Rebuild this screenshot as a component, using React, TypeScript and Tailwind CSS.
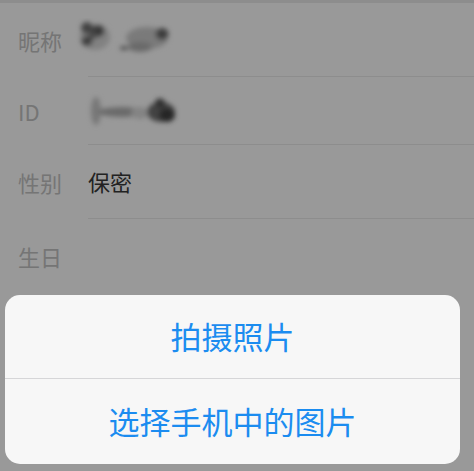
import React from 'react'

const FONT = { fontFamily: '"Noto Sans CJK SC", "Noto Sans", sans-serif' }

// blurred (redacted) nickname / id values, drawn in page coordinates
function Smudge({ viewBox, children }: { viewBox: string; children: React.ReactNode }) {
  return (
    <svg width="116" height="44" viewBox={viewBox} className="-ml-[14px] shrink-0">
      <defs>
        <filter id="smudge" x="-20%" y="-50%" width="140%" height="200%">
          <feGaussianBlur stdDeviation="2.8" />
        </filter>
      </defs>
      <g filter="url(#smudge)">{children}</g>
    </svg>
  )
}

function Row({ label, h, children, last }: { label: string; h: string; children?: React.ReactNode; last?: boolean }) {
  return (
    <div className={`flex items-center pl-[18px] ${h}`}>
      <span className="w-[70px] text-[22px] text-[#c4c4c4]">{label}</span>
      <div className={`flex h-full flex-1 items-center ${last ? '' : 'border-b border-[#ececec]'}`}>
        {children}
      </div>
    </div>
  )
}

export default function App() {
  return (
    <div className="relative h-[471px] w-[474px] overflow-hidden bg-white" style={FONT}>
      <div className="h-[3px] bg-[#ebebeb]" />
      <Row label="昵称" h="h-[74px]">
        <Smudge viewBox="74 18 116 44">
          <ellipse cx="95" cy="37" rx="15" ry="13" fill="#d8d8d8" />
          <ellipse cx="87" cy="28" rx="6" ry="6" fill="#707070" />
          <ellipse cx="98" cy="31" rx="6.5" ry="6" fill="#5a5a5a" />
          <ellipse cx="87" cy="41" rx="5.5" ry="5" fill="#666" />
          <ellipse cx="93" cy="35" rx="4" ry="4" fill="#7a7a7a" />
          <ellipse cx="147" cy="38" rx="21" ry="11" fill="#cccccc" />
          <ellipse cx="140" cy="47" rx="12" ry="5" fill="#b0b0b0" />
          <ellipse cx="162" cy="34" rx="6.5" ry="6" fill="#666" />
          <ellipse cx="124" cy="48" rx="4" ry="2" fill="#808080" />
        </Smudge>
      </Row>
      <Row label="ID" h="h-[68px]">
        <Smudge viewBox="74 89 116 44">
          <ellipse cx="96" cy="111" rx="5" ry="14" fill="#c8c8c8" />
          <ellipse cx="122" cy="112" rx="24" ry="5" fill="#b0b0b0" />
          <ellipse cx="140" cy="113" rx="9" ry="6" fill="#dcdcdc" />
          <ellipse cx="161" cy="112" rx="14" ry="10" fill="#707070" />
          <ellipse cx="167" cy="115" rx="8" ry="7" fill="#404040" />
          <ellipse cx="160" cy="103" rx="5" ry="4.5" fill="#505050" />
        </Smudge>
      </Row>
      <Row label="性别" h="h-[74px]">
        <span className="text-[22px] text-[#3a3a3a]">保密</span>
      </Row>
      <Row label="生日" h="h-[74px]" last />

      <div className="absolute inset-0 bg-black/40" />

      <div className="absolute left-[5px] top-[295px] w-[455px] overflow-hidden rounded-[15px] bg-[#f7f7f7]">
        <div className="flex h-[84px] items-center justify-center border-b border-[#d6d6d8] text-[31px] text-[#1b8cf0]">
          拍摄照片
        </div>
        <div className="flex h-[85px] items-center justify-center text-[31px] text-[#1b8cf0]">
          选择手机中的图片
        </div>
      </div>
    </div>
  )
}
